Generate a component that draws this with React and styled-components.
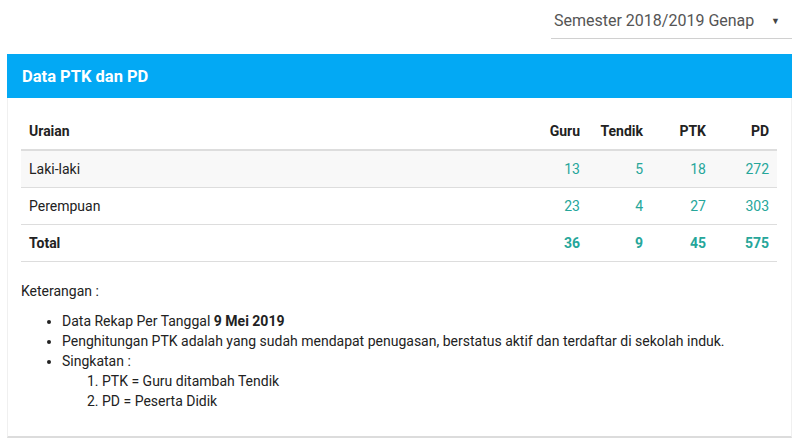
import React from 'react';
import styled, { createGlobalStyle } from 'styled-components';

const GlobalStyle = createGlobalStyle`
  body {
    margin: 0;
    background: #fff;
    font-family: Roboto, "Liberation Sans", sans-serif;
    color: #333;
  }
`;

// halaman
const Page = styled.div`
  padding: 0 6px 0 7px;
`;

const Toolbar = styled.div`
  display: flex;
  justify-content: flex-end;
  height: 54px;
`;

const Select = styled.div`
  width: 241px;
  height: 39px;
  box-sizing: border-box;
  border-bottom: 1px solid #d0d0d0;
  display: flex;
  align-items: center;
  justify-content: space-between;
  padding: 3px 12px 0 3px;
  font-size: 16px;
  color: #555;
  .arrow {
    font-size: 9px;
    color: #444;
  }
`;

const Card = styled.div`
  background: white;
  border: 1px solid #f0f0f0;
  border-top: none;
  border-bottom: 2px solid #dcdcdc;
  padding-bottom: 25px;
`;

const CardHeader = styled.div`
  background: #03a9f4;
  color: #fff;
  height: 44px;
  margin: 0 -1px;
  display: flex;
  align-items: center;
  padding-left: 15px;
  font-size: 16.5px;
  font-weight: bold;
`;

const CardBody = styled.div`
  padding: 14px 14px 0 13px;
`;

const Table = styled.table`
  width: 100%;
  border-collapse: collapse;
  font-size: 14px;
  th,
  td {
    padding: 0 8px;
    height: 36px;
    text-align: left;
  }
  thead th {
    height: 37px;
    font-weight: bold;
    color: #222;
    border-bottom: 2px solid #ddd;
  }
  tbody td {
    border-bottom: 1px solid #ddd;
  }
`;

const Row = styled.tr`
  background: ${(p) => (p.$striped ? '#f8f8f8' : 'transparent')};
  td:first-child {
    font-weight: ${(p) => (p.$total ? 'bold' : 'normal')};
    color: #222;
  }
`;

const NumHead = styled.th`
  && {
    text-align: right;
  }
  width: 47px;
`;

const NumCell = styled.td`
  && {
    text-align: right;
    color: #26a69a;
    font-weight: ${(p) => (p.$bold ? 'bold' : 'normal')};
  }
`;

const Notes = styled.div`
  margin-top: 19px;
  font-size: 14px;
  line-height: 20px;
  color: #222;
  p {
    margin: 0 0 10px;
  }
  ul {
    margin: 0;
    padding-left: 41px;
  }
  ol {
    margin: 0;
    padding-left: 40px;
  }
`;

const rows = [
  { label: 'Laki-laki', values: [13, 5, 18, 272] },
  { label: 'Perempuan', values: [23, 4, 27, 303] },
  { label: 'Total', values: [36, 9, 45, 575], total: true },
];

const App = () => {
  return (
    <Page>
      <GlobalStyle />
      <Toolbar>
        <Select>
          <span>Semester 2018/2019 Genap</span>
          <span className="arrow">▼</span>
        </Select>
      </Toolbar>
      <Card>
        <CardHeader>Data PTK dan PD</CardHeader>
        <CardBody>
          <Table>
            <thead>
              <tr>
                <th>Uraian</th>
                <NumHead>Guru</NumHead>
                <NumHead>Tendik</NumHead>
                <NumHead>PTK</NumHead>
                <NumHead>PD</NumHead>
              </tr>
            </thead>
            <tbody>
              {rows.map((row, i) => (
                <Row key={row.label} $striped={i === 0} $total={row.total}>
                  <td>{row.label}</td>
                  {row.values.map((v, j) => (
                    <NumCell key={j} $bold={row.total}>
                      {v}
                    </NumCell>
                  ))}
                </Row>
              ))}
            </tbody>
          </Table>
          <Notes>
            <p>Keterangan :</p>
            <ul>
              <li>
                Data Rekap Per Tanggal <b>9 Mei 2019</b>
              </li>
              <li>
                Penghitungan PTK adalah yang sudah mendapat penugasan, berstatus
                aktif dan terdaftar di sekolah induk.
              </li>
              <li>
                Singkatan :
                <ol>
                  <li>PTK = Guru ditambah Tendik</li>
                  <li>PD = Peserta Didik</li>
                </ol>
              </li>
            </ul>
          </Notes>
        </CardBody>
      </Card>
    </Page>
  );
};

export default App;
